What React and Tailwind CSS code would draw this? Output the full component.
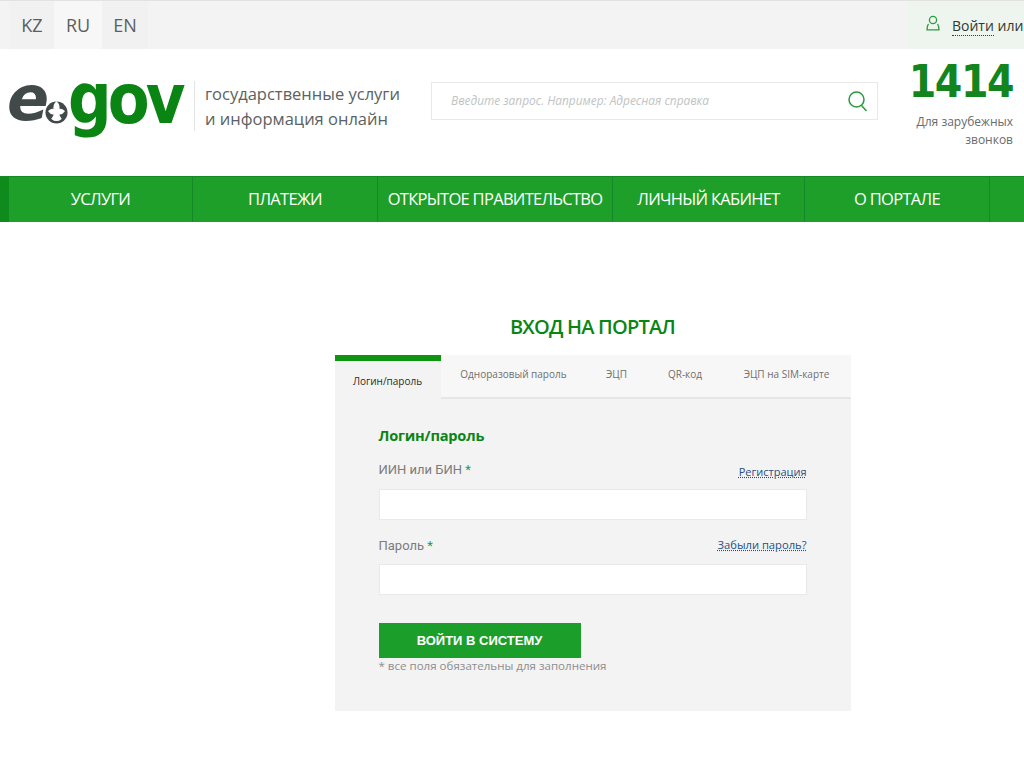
import React from 'react'

const sans = "font-['Open_Sans','Noto_Sans',sans-serif]"

const langs = [
  { label: 'KZ', w: 'w-[44px]', bg: 'bg-[#f1f1f1]' },
  { label: 'RU', w: 'w-[48px]', bg: 'bg-[#f7f7f7]' },
  { label: 'EN', w: 'w-[46px]', bg: 'bg-[#f1f1f1]' },
]

const navItems = [
  { label: 'УСЛУГИ', w: 'w-[184px]' },
  { label: 'ПЛАТЕЖИ', w: 'w-[185px]' },
  { label: 'ОТКРЫТОЕ ПРАВИТЕЛЬСТВО', w: 'w-[235px]' },
  { label: 'ЛИЧНЫЙ КАБИНЕТ', w: 'w-[192px]' },
  { label: 'О ПОРТАЛЕ', w: 'w-[185px]' },
]

const tabs = [
  { label: 'Одноразовый пароль', w: 'w-[146px]' },
  { label: 'ЭЦП', w: 'w-[60px]' },
  { label: 'QR-код', w: 'w-[77px]' },
  { label: 'ЭЦП на SIM-карте', w: 'w-[126px]' },
]

const Logo = () => (
  <div className="flex items-start w-[195px] h-[70px]">
    <span className="font-['DejaVu_Sans',sans-serif] font-bold italic text-[62px] leading-[62px] tracking-[-2px] text-[#414949] ml-[7px] mt-[-8px]">e</span>
    <svg viewBox="0 0 24 24" className="w-[23px] h-[23px] mt-[25px] -ml-[2px] shrink-0">
      <circle cx="12" cy="12" r="11.500" fill="#414949" />
      <path d="M12 1c2.500 2.500 3.200 4.700 2.400 7.900 2-.8 3.400-.4 5.600 1.600-1.600 2.400-3.600 3.400-5.800 2.800.4 2.200 1 3.600 2.400 5.200-1.600 1.400-3.200 1.800-4.600 1.800s-3-.4-4.600-1.800c1.400-1.600 2-3 2.400-5.200-2.200.6-4.200-.4-5.800-2.800 2.200-2 3.600-2.400 5.600-1.600C8.800 5.700 9.500 3.500 12 1z" fill="#fff" stroke="#fff" strokeWidth="1.200" />
    </svg>
    <span className="inline-block font-['DejaVu_Sans',sans-serif] font-bold text-[61px] leading-[62px] tracking-[-4px] text-[#0a8514] mt-[-7px] origin-[50%_66%] scale-y-[1.15]">gov</span>
  </div>
)

export default function App() {
  return (
    <div className={`w-[1024px] h-[768px] overflow-hidden bg-white ${sans}`}>
      <div className="flex justify-between h-[49px] bg-[#f3f3f3] border-t border-[#e2e2e2]">
        <div className="flex pl-[10px]">
          {langs.map((l) => (
            <div key={l.label} className={`${l.w} ${l.bg} flex items-center justify-center text-[18px] text-[#5a5f5f]`}>
              {l.label}
            </div>
          ))}
        </div>
        <div className="w-[116px] bg-[#eef5ee] flex items-center pl-[18px] gap-[12px] overflow-hidden whitespace-nowrap">
          <svg viewBox="0 0 14 16" className="w-[14px] h-[16px] shrink-0 -mt-1" fill="none" stroke="#2d9a45" strokeWidth="1.300">
            <circle cx="7" cy="5" r="3.600" />
            <path d="M2.500 8.800C1.500 10 1 11.500 1 14.800h12c0-3.300-.5-4.800-1.500-6" />
          </svg>
          <span className="text-[14px] text-[#2e3a33]">
            <span className="border-b border-dotted border-[#2e3a33]">Войти</span> или Зарегистрироваться
          </span>
        </div>
      </div>

      <div className="flex h-[127px]">
        <div className="pt-[27px]">
          <Logo />
        </div>
        <div className="mt-[32px] h-[50px] border-l border-[#e4e4e4] ml-[-1px] pl-[10px] text-[16.500px] leading-[25px] text-[#5b6262] whitespace-nowrap w-[237px]">
          <div>государственные услуги</div>
          <div>и информация онлайн</div>
        </div>
        <div className="mt-[33px] w-[447px] h-[38px] border border-[#e8e8e8] flex items-center justify-between pl-[19px] pr-[7px]">
          <span className="text-[11.900px] italic text-[#c0c4c4]">Введите запрос. Например: Адресная справка</span>
          <svg viewBox="0 0 24 24" className="w-[24px] h-[24px]" fill="none" stroke="#2a9a3c" strokeWidth="1.500">
            <circle cx="10.500" cy="10.500" r="7.500" />
            <path d="M15.500 16.500l5 5.500" />
          </svg>
        </div>
        <div className="ml-[29px] w-[106px] flex flex-col items-end">
          <div className="mt-[8px] font-['DejaVu_Sans_Condensed','DejaVu_Sans',sans-serif] font-bold text-[44px] leading-[50px] tracking-[-1.500px] text-[#12851f]">1414</div>
          <div className="mt-[6px] text-right text-[12px] leading-[18px] text-[#666c6c]">
            Для зарубежных
            <br />
            звонков
          </div>
        </div>
      </div>

      <nav className="flex h-[46px] bg-[#1d9f29] border-t border-[#168a22]">
        <div className="w-[9px] bg-[#0f8a1c]" />
        {navItems.map((item) => (
          <div
            key={item.label}
            className={`${item.w} flex items-center justify-center border-r border-[#15892a] text-[16.500px] text-white whitespace-nowrap tracking-[-0.7px]`}
          >
            {item.label}
          </div>
        ))}
      </nav>

      <main className="pt-[92px] flex flex-col items-center pl-[161px]">
        <h1 className="text-[20px] leading-[26px] font-semibold text-[#0a8514] tracking-[-0.8px]">ВХОД НА ПОРТАЛ</h1>
        <div className="mt-[15px] w-[516px] h-[356px] bg-[#f3f3f3]">
          <div className="flex h-[44px] bg-[#f7f7f7] border-b-2 border-[#e6e6e6]">
            <div className="w-[106px] h-[44px] bg-[#f3f3f3] border-t-[6px] border-[#0e950f] flex items-center justify-center text-[10px] text-[#2b2b2b] pt-[3px]">
              Логин/пароль
            </div>
            {tabs.map((t) => (
              <div key={t.label} className={`${t.w} flex items-center justify-center text-[10px] text-[#6f6f6f] pb-[3px] whitespace-nowrap`}>
                {t.label}
              </div>
            ))}
          </div>

          <div className="pl-[44px] pr-[44px] pt-[25px]">
            <h2 className="text-[14.600px] leading-[22px] font-bold text-[#0a8514] tracking-[-0.2px]">Логин/пароль</h2>
            <div className="flex justify-between items-end mt-[14px] h-[20px]">
              <label className="text-[13px] text-[#7c7c7c] font-['Roboto',sans-serif] pb-[1px]">
                ИИН или БИН <span className="text-[#2d9a45]">*</span>
              </label>
              <a className="text-[11px] text-[#1f4f86] underline decoration-dotted">Регистрация</a>
            </div>
            <div className="mt-[9px] h-[31px] bg-white border border-[#e9e9e9]" />
            <div className="flex justify-between items-end mt-[11px] h-[25px]">
              <label className="text-[13px] text-[#7c7c7c] font-['Roboto',sans-serif] pb-[1px]">
                Пароль <span className="text-[#2d9a45]">*</span>
              </label>
              <a className="text-[11.200px] text-[#1f4f86] underline decoration-dotted pb-[2px]">Забыли пароль?</a>
            </div>
            <div className="mt-[8px] h-[31px] bg-white border border-[#e9e9e9]" />
            <button className="mt-[28px] block w-[202px] h-[35px] bg-[#1c9f2a] font-['Liberation_Sans',sans-serif] font-bold text-[13px] text-white">
              ВОЙТИ В СИСТЕМУ
            </button>
            <p className="text-[11.550px] leading-[18px] text-[#8d8d8d] mt-[-1px]">* все поля обязательны для заполнения</p>
          </div>
        </div>
      </main>
    </div>
  )
}
